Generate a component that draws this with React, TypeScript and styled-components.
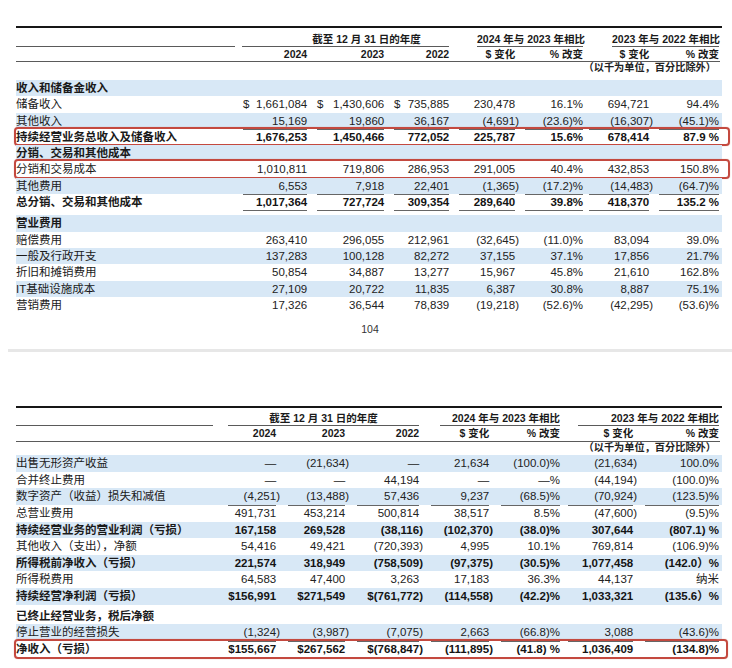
import React from "react";
import styled, { createGlobalStyle, css } from "styled-components";

const GlobalStyle = createGlobalStyle`
  html, body {
    margin: 0;
    padding: 0;
    background: #ffffff;
  }
  body {
    font-family: "Liberation Sans", "Noto Sans CJK SC", sans-serif;
    color: #1f1f1f;
  }
`;

type Line = {
  label: string;
  vals?: string[];
  stripe?: boolean;
  bold?: boolean;
  section?: boolean;
  rule?: boolean;
  gap?: number;
  box?: boolean;
  dollar?: boolean;
};

type Group = { col: string; text: string; ml: number; mr: number; pl?: number; align: "center" | "right" };

type Spec = {
  cols: string;
  rowH: number;
  cellPad: number;
  boxRight: number;
  labelRuleGap: number;
  head1: { pt: number; lh: number };
  head2: number;
  units: { lh: number; mb: number };
  groups: Group[];
  rows: Line[];
};

// columns holding $ amounts get room for a hanging ")"
const MONEY_COLS = [0, 1, 2, 3, 5];

const Page = styled.div`
  width: 732px;
  height: 668px;
  overflow: hidden;
  padding-top: 26px;
  box-sizing: border-box;
`;

const Sheet = styled.section<{ $cols: string }>`
  --cols: ${(p) => p.$cols};
  margin-left: 16px;
  width: 706px;
`;

const TopRule = styled.div`
  height: 2px;
  background: #161616;
`;

const HeadGrid = styled.div`
  display: grid;
  grid-template-columns: var(--cols);
  padding-right: 3px;
  font-size: 10.5px;
  font-weight: 700;
  white-space: nowrap;
  color: #1a1a1a;
`;

const GroupHead = styled.div<{ $col: string; $ml: number; $mr: number; $pl: number; $pt: number; $lh: number; $align: string }>`
  grid-column: ${(p) => p.$col};
  margin-left: ${(p) => p.$ml}px;
  margin-right: ${(p) => p.$mr}px;
  padding-left: ${(p) => p.$pl}px;
  padding-top: ${(p) => p.$pt}px;
  line-height: ${(p) => p.$lh}px;
  text-align: ${(p) => p.$align};
  border-bottom: 1px solid #5a5a5a;
`;

const SubHeadGrid = styled(HeadGrid)<{ $lh: number }>`
  line-height: ${(p) => p.$lh}px;
  border-bottom: 1px solid #5a5a5a;
  margin-right: 2px;
  padding-right: 1px;
`;

const SubHead = styled.div<{ $pr: number }>`
  text-align: right;
  padding-right: ${(p) => p.$pr}px;
`;

const Units = styled.div<{ $lh: number; $mb: number }>`
  text-align: right;
  padding-right: 6px;
  font-size: 10.2px;
  font-weight: 700;
  line-height: ${(p) => p.$lh}px;
  margin-bottom: ${(p) => p.$mb}px;
  color: #222;
  white-space: nowrap;
`;

const Row = styled.div<{ $h: number; $stripe?: boolean; $bold?: boolean; $gap?: number; $box?: boolean; $boxRight: number }>`
  position: relative;
  display: grid;
  grid-template-columns: var(--cols);
  padding-right: 3px;
  height: ${(p) => p.$h}px;
  line-height: ${(p) => p.$h}px;
  margin-top: ${(p) => p.$gap ?? 0}px;
  background: ${(p) => (p.$stripe ? "#d8e8f6" : "transparent")};
  font-size: 11.5px;
  font-weight: ${(p) => (p.$bold ? 700 : 400)};
  color: ${(p) => (p.$bold ? "#141414" : "#222")};
  ${(p) =>
    p.$box &&
    css`
      &::after {
        content: "";
        position: absolute;
        top: -2px;
        bottom: -1px;
        left: -2px;
        right: -${p.$boxRight}px;
        border: 2px solid #c4493f;
        border-radius: 4px;
        box-shadow: 0 0 1px rgba(196, 73, 63, 0.6);
        pointer-events: none;
      }
    `}
`;

const Label = styled.div<{ $strong?: boolean }>`
  white-space: nowrap;
  font-weight: ${(p) => (p.$strong ? 700 : "inherit")};
  color: #1a1a1a;
`;

const Cell = styled.div<{ $pl: number; $pr: number }>`
  display: flex;
  min-width: 0;
  padding-left: ${(p) => p.$pl}px;
  padding-right: ${(p) => p.$pr}px;
`;

const Figure = styled.div<{ $rule?: boolean }>`
  flex: 1;
  display: flex;
  justify-content: flex-end;
  box-sizing: border-box;
  white-space: pre;
  border-bottom: ${(p) => (p.$rule ? "1px solid #666" : "none")};
`;

const Dollar = styled.span`
  margin-right: auto;
`;

const Hang = styled.span`
  margin-right: -3.8px;
`;

const PageNo = styled.div`
  margin-top: 8px;
  line-height: 16px;
  font-size: 10.5px;
  text-align: center;
  padding-left: 8px;
  color: #333;
`;

const PageBreak = styled.div`
  margin: 12px 0 54px 8px;
  height: 3px;
  background: #e7e7e7;
`;

const Amount: React.FC<{ v: string; money: boolean }> = ({ v, money }) => {
  if (money && v.endsWith(")")) {
    return (
      <span>
        {v.slice(0, -1)}
        <Hang>)</Hang>
      </span>
    );
  }
  return <span>{v}</span>;
};

const Statement: React.FC<{ spec: Spec; heads: string[] }> = ({ spec, heads }) => (
  <Sheet $cols={spec.cols}>
    <TopRule />
    <HeadGrid>
      <GroupHead
        $col="1"
        $ml={0}
        $mr={spec.labelRuleGap}
        $pl={0}
        $pt={spec.head1.pt}
        $lh={spec.head1.lh}
        $align="left"
      >
        {"\u00a0"}
      </GroupHead>
      {spec.groups.map((g) => (
        <GroupHead
          key={g.text}
          $col={g.col}
          $ml={g.ml}
          $mr={g.mr}
          $pl={g.pl ?? 0}
          $pt={spec.head1.pt}
          $lh={spec.head1.lh}
          $align={g.align}
        >
          {g.text}
        </GroupHead>
      ))}
    </HeadGrid>
    <SubHeadGrid $lh={spec.head2}>
      <div />
      {heads.map((h, i) => (
        <SubHead key={i} $pr={MONEY_COLS.includes(i) ? 3.8 : 0}>
          {h}
        </SubHead>
      ))}
    </SubHeadGrid>
    <Units $lh={spec.units.lh} $mb={spec.units.mb}>
      （以千为单位，百分比除外）
    </Units>
    {spec.rows.map((r) => (
      <Row
        key={r.label}
        $h={spec.rowH}
        $stripe={r.stripe}
        $bold={r.bold}
        $gap={r.gap}
        $box={r.box}
        $boxRight={spec.boxRight}
      >
        <Label $strong={r.section}>{r.label}</Label>
        {(r.vals ?? ["", "", "", "", "", "", ""]).map((v, i) => {
          const money = MONEY_COLS.includes(i);
          return (
            <Cell key={i} $pl={spec.cellPad} $pr={money ? 3.8 : 0}>
              <Figure $rule={r.rule}>
                {r.dollar && i < 3 && <Dollar>$</Dollar>}
                <Amount v={v} money={money} />
              </Figure>
            </Cell>
          );
        })}
      </Row>
    ))}
  </Sheet>
);

const first: Spec = {
  cols: "221px 74px 77px 65px 66px 64px 70px 66px",
  rowH: 16.3,
  cellPad: 6,
  boxRight: 8,
  labelRuleGap: 2,
  head1: { pt: 5, lh: 13 },
  head2: 14,
  units: { lh: 12, mb: 6 },
  groups: [
    { col: "2 / span 3", text: "截至 12 月 31 日的年度", ml: 5, mr: 4, pl: 42, align: "center" },
    { col: "5 / span 2", text: "2024 年与 2023 年相比", ml: 24, mr: 0, align: "right" },
    { col: "7 / span 2", text: "2023 年与 2022 年相比", ml: 29, mr: 0, align: "right" },
  ],
  rows: [
    { label: "收入和储备金收入", stripe: true, section: true },
    { label: "储备收入", dollar: true, vals: ["1,661,084", "1,430,606", "735,885", "230,478", "16.1%", "694,721", "94.4%"] },
    { label: "其他收入", stripe: true, rule: true, vals: ["15,169", "19,860", "36,167", "(4,691)", "(23.6)%", "(16,307)", "(45.1)%"] },
    { label: "持续经营业务总收入及储备收入", bold: true, box: true, vals: ["1,676,253", "1,450,466", "772,052", "225,787", "15.6%", "678,414", "87.9 %"] },
    { label: "分销、交易和其他成本", stripe: true, section: true },
    { label: "分销和交易成本", box: true, vals: ["1,010,811", "719,806", "286,953", "291,005", "40.4%", "432,853", "150.8%"] },
    { label: "其他费用", stripe: true, rule: true, vals: ["6,553", "7,918", "22,401", "(1,365)", "(17.2)%", "(14,483)", "(64.7)%"] },
    { label: "总分销、交易和其他成本", bold: true, rule: true, vals: ["1,017,364", "727,724", "309,354", "289,640", "39.8%", "418,370", "135.2 %"] },
    { label: "营业费用", stripe: true, section: true, gap: 5 },
    { label: "赔偿费用", vals: ["263,410", "296,055", "212,961", "(32,645)", "(11.0)%", "83,094", "39.0%"] },
    { label: "一般及行政开支", stripe: true, vals: ["137,283", "100,128", "82,272", "37,155", "37.1%", "17,856", "21.7%"] },
    { label: "折旧和摊销费用", vals: ["50,854", "34,887", "13,277", "15,967", "45.8%", "21,610", "162.8%"] },
    { label: "IT基础设施成本", stripe: true, vals: ["27,109", "20,722", "11,835", "6,387", "30.8%", "8,887", "75.1%"] },
    { label: "营销费用", vals: ["17,326", "36,544", "78,839", "(19,218)", "(52.6)%", "(42,295)", "(53.6)%"] },
  ],
};

const second: Spec = {
  cols: "204px 60px 69px 74px 70px 67px 77px 82px",
  rowH: 16.6,
  cellPad: 8,
  boxRight: 6,
  labelRuleGap: 7,
  head1: { pt: 3, lh: 14 },
  head2: 15,
  units: { lh: 11, mb: 2 },
  groups: [
    { col: "2 / span 3", text: "截至 12 月 31 日的年度", ml: 8, mr: 4, align: "center" },
    { col: "5 / span 2", text: "2024 年与 2023 年相比", ml: 17, mr: 0, align: "right" },
    { col: "7 / span 2", text: "2023 年与 2022 年相比", ml: 18, mr: 0, align: "right" },
  ],
  rows: [
    { label: "出售无形资产收益", stripe: true, vals: ["—", "(21,634)", "—", "21,634", "(100.0)%", "(21,634)", "100.0%"] },
    { label: "合并终止费用", vals: ["—", "—", "44,194", "—", "—%", "(44,194)", "(100.0)%"] },
    { label: "数字资产（收益）损失和减值", stripe: true, rule: true, vals: ["(4,251)", "(13,488)", "57,436", "9,237", "(68.5)%", "(70,924)", "(123.5)%"] },
    { label: "总营业费用", vals: ["491,731", "453,214", "500,814", "38,517", "8.5%", "(47,600)", "(9.5)%"] },
    { label: "持续经营业务的营业利润（亏损）", stripe: true, bold: true, vals: ["167,158", "269,528", "(38,116)", "(102,370)", "(38.0)%", "307,644", "(807.1) %"] },
    { label: "其他收入（支出），净额", rule: true, vals: ["54,416", "49,421", "(720,393)", "4,995", "10.1%", "769,814", "(106.9)%"] },
    { label: "所得税前净收入（亏损）", stripe: true, bold: true, vals: ["221,574", "318,949", "(758,509)", "(97,375)", "(30.5)%", "1,077,458", "(142.0）%"] },
    { label: "所得税费用", rule: true, vals: ["64,583", "47,400", "3,263", "17,183", "36.3%", "44,137", "纳米"] },
    { label: "持续经营净利润（亏损）", stripe: true, bold: true, vals: ["$156,991", "$271,549", "$(761,772)", "(114,558)", "(42.2)%", "1,033,321", "(135.6）%"] },
    { label: "已终止经营业务，税后净额", section: true, gap: 3.4 },
    { label: "停止营业的经营损失", stripe: true, rule: true, vals: ["(1,324)", "(3,987)", "(7,075)", "2,663", "(66.8)%", "3,088", "(43.6)%"] },
    { label: "净收入（亏损）", bold: true, box: true, vals: ["$155,667", "$267,562", "$(768,847)", "(111,895)", "(41.8) %", "1,036,409", "(134.8)%"] },
  ],
};

const HEADS = ["2024", "2023", "2022", "$ 变化", "% 改变", "$ 变化", "% 改变"];

export default function App() {
  return (
    <>
      <GlobalStyle />
      <Page>
        <Statement spec={first} heads={HEADS} />
        <PageNo>104</PageNo>
        <PageBreak />
        <Statement spec={second} heads={HEADS} />
      </Page>
    </>
  );
}
